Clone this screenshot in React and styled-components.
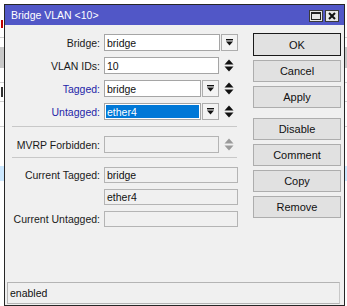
import React from "react";
import styled, { createGlobalStyle } from "styled-components";

const GlobalStyle = createGlobalStyle`
  html, body {
    margin: 0;
    padding: 0;
    width: 347px;
    height: 306px;
    overflow: hidden;
    background: #ffffff;
    font-family: "Liberation Sans", Arial, sans-serif;
  }
`;

const Desktop = styled.div`
  position: relative;
  width: 347px;
  height: 306px;
  overflow: hidden;
  background: #fff;
`;

// the table window behind the dialog, only a sliver shows on the left
const Backdrop = styled.div`
  display: flex;
  flex-direction: column;
`;

const BackRow = styled.div`
  height: ${(p) => p.h}px;
  background: ${(p) => p.bg || "#fff"};
  border-bottom: 1px solid ${(p) => (p.line ? "#d0d0d0" : "transparent")};
  display: flex;
  align-items: center;
`;

// leftover stroke of a glyph from the hidden table cell
const Stub = styled.div`
  width: 2px;
  height: ${(p) => p.h}px;
  margin-left: 1px;
  background: ${(p) => p.color};
`;

const Window = styled.div`
  position: absolute;
  left: 4px;
  top: 4px;
  width: 341px;
  height: 302px;
  box-sizing: border-box;
  border: 1px solid #262626;
  background: #f0f0f0;
  display: flex;
  flex-direction: column;
`;

const TitleBar = styled.div`
  height: 20px;
  background: #5157c7;
  display: flex;
  align-items: center;
  justify-content: space-between;
  padding: 0 5px 0 6px;
`;

const Title = styled.span`
  color: #fff;
  font-size: 10.5px;
`;

const TitleButtons = styled.div`
  display: flex;
  gap: 2px;
  margin-top: 2px;
`;

const TitleButton = styled.div`
  width: 14px;
  height: 12px;
  box-sizing: border-box;
  border: 1px solid #3a3a3a;
  background: #e6e6e6;
  display: flex;
  align-items: center;
  justify-content: center;
`;

const Body = styled.div`
  flex: 1;
  display: flex;
`;

const Form = styled.div`
  padding-top: 9px;
  display: flex;
  flex-direction: column;
`;

const Group = styled.div`
  display: grid;
  grid-template-columns: 95px 134px;
  column-gap: 4px;
  row-gap: 6px;
`;

const Separator = styled.div`
  height: 1px;
  background: #c8c8c8;
  margin: ${(p) => p.m};
  margin-left: 7px;
  width: 225px;
`;

const Label = styled.div`
  font-size: 10.5px;
  text-align: right;
  align-self: center;
  white-space: nowrap;
  color: ${(p) => (p.blue ? "#2525a8" : "#1a1a1a")};
`;

const Field = styled.div`
  display: flex;
  align-items: stretch;
  height: ${(p) => p.h || 17}px;
  gap: 1px;
`;

const Input = styled.div`
  flex: 1;
  box-sizing: border-box;
  border: 1px solid ${(p) => (p.disabled ? "#b4b4b4" : "#a5a5a5")};
  background: ${(p) => (p.disabled ? "#f0f0f0" : "#fff")};
  padding: 1px;
  display: flex;
  font-size: 10.5px;
  color: #111;
`;

const Value = styled.span`
  flex: 1;
  display: flex;
  align-items: center;
  padding-left: 1px;
  background: ${(p) => (p.selected ? "#0078d7" : "transparent")};
  color: ${(p) => (p.selected ? "#fff" : "#111")};
`;

const DropButton = styled.div`
  width: 17px;
  box-sizing: border-box;
  border: 1px solid #adadad;
  background: #f3f3f3;
  display: flex;
  align-items: center;
  justify-content: center;
`;

const Spin = styled.div`
  width: 18px;
  display: flex;
  align-items: center;
  justify-content: center;
`;

const Buttons = styled.div`
  margin-left: 15px;
  padding-top: 8px;
  width: 88px;
  display: flex;
  flex-direction: column;
  gap: 4px;
`;

const Button = styled.div`
  height: ${(p) => (p.primary ? 23 : 22)}px;
  box-sizing: border-box;
  border: 1px solid ${(p) => (p.primary ? "#1a1a1a" : "#adadad")};
  background: #e1e1e1;
  font-size: 11px;
  color: #111;
  display: flex;
  align-items: center;
  justify-content: center;
  margin-top: ${(p) => (p.spaced ? 6 : 0)}px;
`;

const StatusBar = styled.div`
  height: 22px;
  box-sizing: border-box;
  margin: 0 4px 1px 2px;
  border: 1px solid #b4b4b4;
  border-right-color: #c8c8c8;
  font-size: 10.5px;
  color: #111;
  display: flex;
  align-items: center;
  padding-left: 2px;
`;

const DropIcon = () => (
  <svg width="9" height="9" viewBox="0 0 9 9">
    <rect x="1" y="1" width="7" height="1.4" fill="#111" />
    <polygon points="1,3.6 8,3.6 4.5,7.6" fill="#111" />
  </svg>
);

const SpinIcon = ({ disabled }) => (
  <svg width="10" height="13" viewBox="0 0 10 13">
    <polygon points="0.5,5.5 9.5,5.5 5,0.5" fill={disabled ? "#9a9a9a" : "#111"} />
    <polygon points="0.5,7.5 9.5,7.5 5,12.5" fill={disabled ? "#9a9a9a" : "#111"} />
  </svg>
);

const MaxIcon = () => (
  <svg width="10" height="8" viewBox="0 0 10 8">
    <rect x="0.5" y="0.5" width="9" height="7" fill="none" stroke="#222" />
    <rect x="0.5" y="0.5" width="9" height="1.5" fill="#222" />
  </svg>
);

const CloseIcon = () => (
  <svg width="8" height="8" viewBox="0 0 8 8">
    <path d="M1 1 L7 7 M7 1 L1 7" stroke="#111" strokeWidth="2" />
  </svg>
);

export default function App() {
  return (
    <Desktop>
      <GlobalStyle />
      <Backdrop>
        <BackRow h={10} />
        <BackRow h={26} line>
          <Stub h={8} color="#c00000" />
        </BackRow>
        <BackRow h={8} />
        <BackRow h={20} bg="#c8c8c8" />
        <BackRow h={14} line />
        <BackRow h={18} line>
          <Stub h={10} color="#333" />
        </BackRow>
        <BackRow h={24} line />
        <BackRow h={38} />
        <BackRow h={14} bg="#cce8ff" />
      </Backdrop>

      <Window>
        <TitleBar>
          <Title>Bridge VLAN &lt;10&gt;</Title>
          <TitleButtons>
            <TitleButton>
              <MaxIcon />
            </TitleButton>
            <TitleButton>
              <CloseIcon />
            </TitleButton>
          </TitleButtons>
        </TitleBar>

        <Body>
          <Form>
            <Group>
              <Label>Bridge:</Label>
              <Field>
                <Input>
                  <Value>bridge</Value>
                </Input>
                <DropButton>
                  <DropIcon />
                </DropButton>
              </Field>

              <Label>VLAN IDs:</Label>
              <Field>
                <Input>
                  <Value>10</Value>
                </Input>
                <Spin>
                  <SpinIcon />
                </Spin>
              </Field>

              <Label blue>Tagged:</Label>
              <Field>
                <Input>
                  <Value>bridge</Value>
                </Input>
                <DropButton>
                  <DropIcon />
                </DropButton>
                <Spin>
                  <SpinIcon />
                </Spin>
              </Field>

              <Label blue>Untagged:</Label>
              <Field>
                <Input>
                  <Value selected>ether4</Value>
                </Input>
                <DropButton>
                  <DropIcon />
                </DropButton>
                <Spin>
                  <SpinIcon />
                </Spin>
              </Field>
            </Group>

            <Separator m="6px 0 9px" />

            <Group>
              <Label>MVRP Forbidden:</Label>
              <Field>
                <Input disabled>
                  <Value />
                </Input>
                <Spin>
                  <SpinIcon disabled />
                </Spin>
              </Field>
            </Group>

            <Separator m="4px 0 9px" />

            <Group>
              <Label>Current Tagged:</Label>
              <Field h={16}>
                <Input disabled>
                  <Value>bridge</Value>
                </Input>
              </Field>

              <span />
              <Field h={16}>
                <Input disabled>
                  <Value>ether4</Value>
                </Input>
              </Field>

              <Label>Current Untagged:</Label>
              <Field h={16}>
                <Input disabled>
                  <Value />
                </Input>
              </Field>
            </Group>
          </Form>

          <Buttons>
            <Button primary>OK</Button>
            <Button>Cancel</Button>
            <Button>Apply</Button>
            <Button spaced>Disable</Button>
            <Button>Comment</Button>
            <Button>Copy</Button>
            <Button>Remove</Button>
          </Buttons>
        </Body>

        <StatusBar>enabled</StatusBar>
      </Window>
    </Desktop>
  );
}
